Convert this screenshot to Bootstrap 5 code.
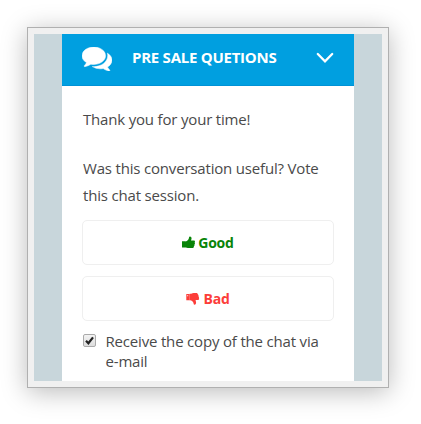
<!DOCTYPE html>
<html lang="en">
<head>
<meta charset="utf-8">
<meta name="viewport" content="width=device-width, initial-scale=1">
<title>Chat feedback</title>
<link href="https://cdn.jsdelivr.net/npm/bootstrap@5.3.0/dist/css/bootstrap.min.css" rel="stylesheet">
<style>
body{font-family:"Open Sans",sans-serif;font-size:15px;letter-spacing:-.18px;color:#4a4a4a;background:#fff}
.stage{padding:27px 0 0 27px}
.frame{width:362px;height:361px;border:1px solid #b0b0b0;padding:6px;background:#f0f0f0;box-shadow:0 4px 24px rgba(0,0,0,.27)}
.backdrop{background:#c8d6db;padding:0 28px}
.chat-head{height:52px;background:#009fe0;border-bottom:1px solid #0092d6;padding:0 20px}
.chat-logo{margin-top:-2px}
.chat-title{font-size:15px;letter-spacing:-.25px;font-weight:700;line-height:20px;margin-left:20px;margin-top:-6px;white-space:nowrap}
.chat-down{margin-top:-4px}
.chat-body{padding:20px 20px 0 20px}
.message{line-height:27px;padding-left:1px}
.second{margin-top:22px}
.votes{gap:11px;margin-top:11px}
.vote{height:45px;border:1px solid #efefef;border-radius:5px;font-size:14px;letter-spacing:-.2px;font-weight:700;padding:0;gap:3px;background:#fff}
.good{color:#088408}
.bad{color:#fc3d39}
.copy-row{line-height:20px;margin-top:10px;padding-left:.5px}
.copy-label{margin-left:10px}
.tick{width:13px;height:13px;margin-top:3px}
svg{display:block;flex:none}
</style>
<script src="https://cdn.jsdelivr.net/npm/bootstrap@5.3.0/dist/js/bootstrap.bundle.min.js"></script>
</head>
<body>
<main class="stage vh-100">
<div class="frame">
  <div class="backdrop h-100">
    <div class="bg-white h-100 overflow-hidden">
      <div class="chat-head d-flex align-items-center text-white">
        <svg class="chat-logo" width="30" height="24" viewBox="0 0 1792 1408" preserveAspectRatio="none" fill="#fff"><path stroke="#fff" stroke-width="30" d="M1408 512q0 139-94 257T1057 955t-353 69q-86 0-176-16-124 88-278 128-36 9-86 16h-3q-11 0-20.500-8t-11.500-21q-1-3-1-6.500t.5-6.500 2-6l2.500-5 3.500-5.500 4-5 4.500-5 4-4.500q5-6 23-25t26-29.500 22.500-29 25-38.500 20.500-44Q142 846 71 740T0 512q0-139 94-257T351 69 704 0t353 69 257 186 94 257zM1792 768q0 120-71 224.500T1526 1169q10 24 20.500 44t25 38.500 22.500 29 26 29.500 23 25q1 1 4 4.500t4.500 5 4 5 3.500 5.500l2.500 5 2 6 .5 6.500-1 6.500q-3 14-13 22t-22 7q-50-7-86-16-154-40-278-128-90 16-176 16-271 0-472-132 58 4 88 4 161 0 309-45t264-129q125-92 192-212t67-254q0-77-23-152 129 71 204 178t75 230z"/></svg>
        <div class="chat-title">PRE SALE QUETIONS</div>
        <svg class="chat-down ms-auto" width="18" height="12" viewBox="0 0 18 12" fill="none" stroke="#fff" stroke-width="2.300"><path d="M1.800 2 9 9.300l7.200-7.300" stroke-linecap="round"/></svg>
      </div>
      <div class="chat-body">
        <div class="message">Thank you for your time!</div>
        <div class="message second">Was this conversation useful? Vote this chat session.</div>
        <div class="d-grid votes">
          <button type="button" class="vote good d-flex align-items-center justify-content-center">
            <svg width="13" height="13" viewBox="0 0 13 13" fill="currentColor"><path d="M0 5.200h3.600v6.300H0zM3.600 5.500C5.500 5 6.300 3.800 6.800 2.600 7.100 1.800 6.900.4 7.900.4c1.600 0 1.900 1.600 1.500 2.900L9 4.500h2.600c1.500 0 1.700 1.400 1 2.100.6.600.4 1.500-.2 2 .3.700 0 1.300-.5 1.600.1 1.200-.7 1.900-1.800 1.900H8c-1.700 0-2.500-.5-4.400-.7z"/></svg>
            <span>Good</span>
          </button>
          <button type="button" class="vote bad d-flex align-items-center justify-content-center">
            <svg width="14" height="13" viewBox="0 0 14 13" fill="currentColor"><path fill-rule="evenodd" d="M.3 2h3.600v6.300H.3zM1.200 3.200v1h1v-1zM3.700 1.800C6 1.500 7 .9 9 .9h1c1.300 0 1.900.7 1.900 1.700.6.400.8 1 .5 1.700.7.500.8 1.200.4 1.800.8.900.3 2-.8 2H9.600l.4 2c.3 1.400-.2 2.600-1.500 2.600-.9 0-.8-1.500-1.200-2.300C6.600 9.400 5.900 8.500 3.700 8z"/></svg>
            <span>Bad</span>
          </button>
        </div>
        <div class="copy-row d-flex">
          <svg class="tick" viewBox="0 0 13 13"><defs><linearGradient id="g" x2="0" y2="1"><stop stop-color="#f4f4f4"/><stop offset="1" stop-color="#dcdcdc"/></linearGradient></defs><rect x=".5" y=".5" width="12" height="12" rx="1.500" fill="url(#g)" stroke="#aaa"/><path d="M3 6.700l2.400 2.600L10 3.400" fill="none" stroke="#222" stroke-width="2.200"/></svg>
          <div class="copy-label">Receive the copy of the chat via e-mail</div>
        </div>
      </div>
    </div>
  </div>
</div>
</main>
</body>
</html>
